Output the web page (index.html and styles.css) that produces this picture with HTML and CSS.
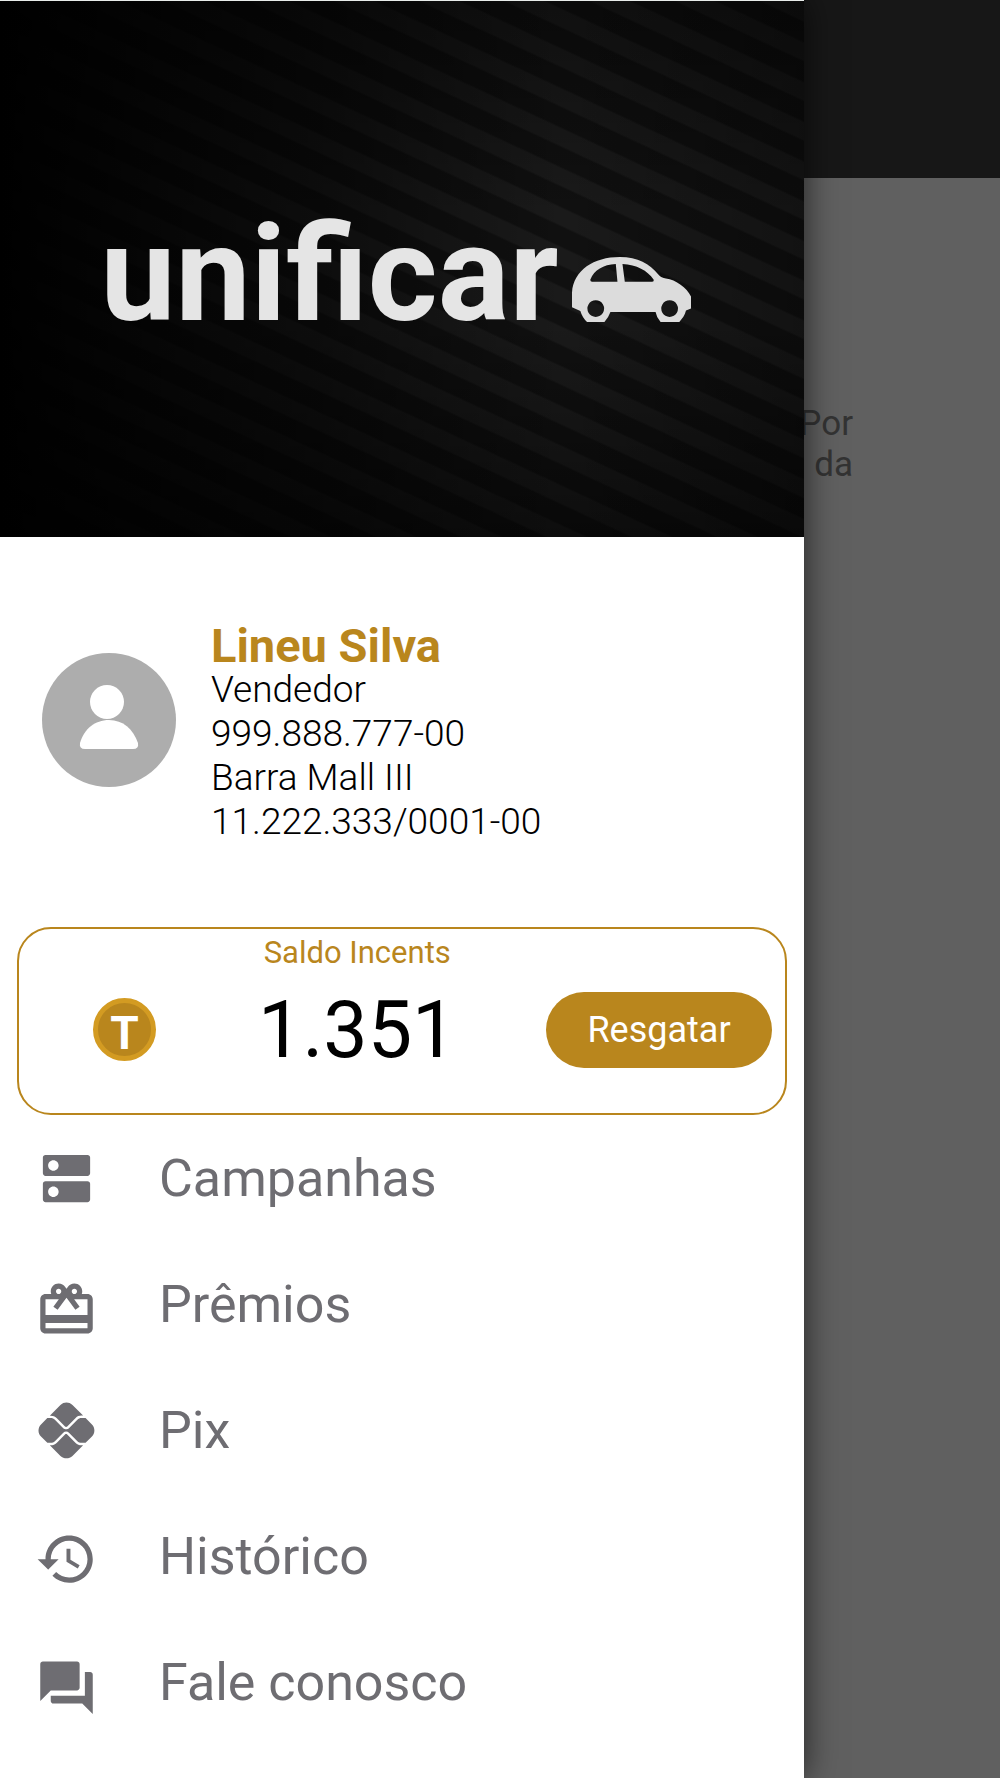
FILE: index.html
```html
<!DOCTYPE html>
<html lang="pt-BR">
<head>
<meta charset="utf-8">
<meta name="viewport" content="width=device-width, initial-scale=1">
<title>unificar</title>
<link rel="stylesheet" href="styles.css">
</head>
<body>
<div class="app">
  <main class="page">
    <div class="page-bar"></div>
    <p class="page-text">Por<br>da</p>
  </main>

  <aside class="drawer">
    <header class="brand">
      <span class="brand-name">unificar</span>
      <svg class="brand-car" viewBox="547 169 356 194" aria-hidden="true">
        <path fill="currentColor" fill-rule="evenodd" d="M547 275C552 208 612 169 690 169C745 169 778 189 806 222Q814 232 828 233C858 237 890 260 903 287V323L888 329C885 343 877 353 868 363H812Q800 350 797 333H662Q656 350 644 363H592Q578 350 572 330L547 319ZM602 236C614 208 640 192 678 190L683 243H607Q601 243 602 236ZM698 190C740 192 773 210 791 236Q793 243 786 243H705ZM618 298a25 25 0 1 0 .1 0ZM839 298a25 25 0 1 0 .1 0Z"/>
      </svg>
    </header>

    <section class="profile">
      <svg class="avatar" viewBox="0 0 134 134" aria-hidden="true">
        <circle cx="67" cy="67" r="67" fill="#adadad"/>
        <circle cx="65" cy="49" r="17" fill="#fff"/>
        <path fill="#fff" d="M38 90C42 76 53 67 67 67S91 76 96 90Q97 96 91 96H43Q37 96 38 90Z"/>
      </svg>
      <div class="profile-info">
        <h1 class="profile-name">Lineu Silva</h1>
        <p>Vendedor</p>
        <p>999.888.777-00</p>
        <p>Barra Mall III</p>
        <p>11.222.333/0001-00</p>
      </div>
    </section>

    <section class="balance">
      <h2 class="balance-label">Saldo Incents</h2>
      <span class="coin">T</span>
      <p class="balance-value">1.351</p>
      <button class="redeem" type="button">Resgatar</button>
    </section>

    <nav class="menu">
      <a class="menu-item" href="#campanhas">
        <svg class="menu-icon" viewBox="0 0 24 24" aria-hidden="true"><path d="M20 13H4c-.55 0-1 .45-1 1v6c0 .55.45 1 1 1h16c.55 0 1-.45 1-1v-6c0-.55-.45-1-1-1zM7 19c-1.1 0-2-.9-2-2s.9-2 2-2 2 .9 2 2-.9 2-2 2zM20 3H4c-.55 0-1 .45-1 1v6c0 .55.45 1 1 1h16c.55 0 1-.45 1-1V4c0-.55-.45-1-1-1zM7 9c-1.1 0-2-.9-2-2s.9-2 2-2 2 .9 2 2-.9 2-2 2z"/></svg>
        Campanhas
      </a>
      <a class="menu-item" href="#premios">
        <svg class="menu-icon" viewBox="0 -2 24 24" aria-hidden="true"><path d="M20 6h-2.18c.11-.31.18-.65.18-1 0-1.66-1.34-3-3-3-1.05 0-1.96.54-2.5 1.35l-.5.67-.5-.68C10.96 2.54 10.05 2 9 2 7.34 2 6 3.34 6 5c0 .35.07.69.18 1H4c-1.11 0-1.99.89-1.99 2L2 19c0 1.11.89 2 2 2h16c1.11 0 2-.89 2-2V8c0-1.11-.89-2-2-2zm-5-2c.55 0 1 .45 1 1s-.45 1-1 1-1-.45-1-1 .45-1 1-1zM9 4c.55 0 1 .45 1 1s-.45 1-1 1-1-.45-1-1 .45-1 1-1zm11 15H4v-2h16v2zm0-5H4V8h5.08L7 10.83 8.62 12 11 8.76l1-1.36 1 1.36L15.380 12 17 10.830 14.920 8H20v6z"/></svg>
        Prêmios
      </a>
      <a class="menu-item" href="#pix">
        <svg class="menu-icon" viewBox="-32 -32 576 576" aria-hidden="true"><path d="M242.400 292.500C247.800 287.100 257.100 287.100 262.500 292.500L339.500 369.500C353.700 383.700 372.600 391.500 392.600 391.500H407.700L310.600 488.600C280.300 518.100 231.100 518.100 200.800 488.600L103.300 391.200H112.600C132.600 391.200 151.500 383.400 165.700 369.200L242.400 292.500zM262.500 218.900C256.100 224.400 247.900 224.500 242.400 218.900L165.700 142.200C151.500 127.100 132.600 120.200 112.600 120.200H103.300L200.700 22.760C231.100-7.586 280.300-7.586 310.600 22.760L407.800 119.900H392.600C372.600 119.900 353.700 127.700 339.500 141.900L262.500 218.900zM112.600 142.700C126.400 142.700 139.100 148.300 149.700 158.100L226.400 234.800C233.600 241.100 243 245.600 252.500 245.600C261.900 245.600 271.300 241.100 278.500 234.800L355.500 157.800C365.300 148.100 378.800 142.500 392.600 142.500H430.300L488.600 200.800C518.900 231.100 518.900 280.300 488.600 310.600L430.300 368.900H392.600C378.800 368.900 365.300 363.300 355.500 353.500L278.500 276.500C264.600 262.600 240.300 262.600 226.400 276.600L149.700 353.200C139.100 363 126.400 368.600 112.600 368.600H80.780L22.760 310.600C-7.586 280.300-7.586 231.100 22.760 200.800L80.780 142.700H112.600z"/></svg>
        Pix
      </a>
      <a class="menu-item" href="#historico">
        <svg class="menu-icon" viewBox="0 -1 24 24" aria-hidden="true"><path d="M13 3c-4.970 0-9 4.030-9 9H1l3.890 3.890.070.140L9 12H6c0-3.870 3.130-7 7-7s7 3.130 7 7-3.130 7-7 7c-1.930 0-3.680-.790-4.940-2.060l-1.420 1.420C8.270 19.990 10.510 21 13 21c4.970 0 9-4.030 9-9s-4.030-9-9-9zm-1 5v5l4.280 2.540.720-1.210-3.500-2.080V8H12z"/></svg>
        Histórico
      </a>
      <a class="menu-item" href="#fale-conosco">
        <svg class="menu-icon" viewBox="0 -2 24 24" aria-hidden="true"><path d="M21 6h-2v9H6v2c0 .55.45 1 1 1h11l4 4V7c0-.55-.45-1-1-1zm-4 6V3c0-.55-.45-1-1-1H3c-.55 0-1 .45-1 1v14l4-4h10c.55 0 1-.45 1-1z"/></svg>
        Fale conosco
      </a>
    </nav>
  </aside>
</div>
</body>
</html>
```
FILE: styles.css
```css
* {
  box-sizing: border-box;
  margin: 0;
}

body {
  font-family: Roboto, "Liberation Sans", sans-serif;
  color: #000;
}

.app {
  position: relative;
  min-height: 100vh;
  background: #606060;
  overflow: hidden;
}

/* Dimmed page behind the open drawer */
.page {
  position: absolute;
  inset: 0;
}

.page-bar {
  height: 178px;
  background: #171717;
}

.page-text {
  padding: 225px 147px 0 0;
  font-size: 35px;
  line-height: 41px;
  text-align: right;
  color: #333;
}

.drawer {
  position: relative;
  width: 80.4%;
  min-height: 100vh;
  padding-bottom: 24px;
  background: #fff;
  box-shadow: 0 0 32px rgba(0, 0, 0, 0.65);
}

.brand {
  display: flex;
  align-items: flex-end;
  justify-content: center;
  gap: 14px;
  height: 537px;
  padding: 0 12px 215px 0;
  border-top: 1px solid #e8ecea;
  color: #e5e5e5;
  background:
    linear-gradient(90deg, #000 0%, rgba(0, 0, 0, 0.5) 40%, transparent 70%, rgba(0, 0, 0, 0.3) 100%),
    linear-gradient(180deg, rgba(0, 0, 0, 0.4), transparent 40%, transparent 60%, rgba(0, 0, 0, 0.5)),
    repeating-linear-gradient(25deg, #101010 0 14px, #1a1a1a 16px 31px, #101010 33px 36px);
}

.brand-name {
  font-size: 134px;
  font-weight: 700;
  line-height: 94px;
}

.brand-car {
  width: 119px;
  height: 65px;
  color: #dcdcdc;
}

.profile {
  display: flex;
  align-items: flex-start;
  gap: 35px;
  padding: 87px 42px 83px;
}

.avatar {
  flex: none;
  width: 134px;
  height: 134px;
  margin-top: 29px;
}

.profile-info {
  font-size: 37px;
  font-weight: 300;
  line-height: 44px;
}

.profile-name {
  font-size: 47px;
  font-weight: 700;
  line-height: 44px;
  color: #b9861d;
}

.balance {
  display: grid;
  grid-template-columns: 165px auto 1fr;
  grid-template-rows: 36px 1fr;
  align-items: center;
  height: 188px;
  margin: 0 17px;
  padding: 6px 13px 25px 74px;
  border: 2px solid #b9861d;
  border-radius: 34px;
}

.coin {
  width: 63px;
  height: 63px;
  padding-top: 8px;
  border: 5px solid #d39b22;
  border-radius: 50%;
  background: #b9861d;
  font-size: 46px;
  font-weight: 700;
  line-height: 45px;
  text-align: center;
  color: #fff;
}

.balance-label {
  grid-column: 2;
  justify-self: center;
  font-size: 31px;
  font-weight: 400;
  line-height: 36px;
  color: #b9861d;
}

.coin {
  grid-column: 1;
}

.balance-value {
  justify-self: center;
  font-size: 79px;
  line-height: 92px;
}

.redeem {
  justify-self: end;
  width: 226px;
  height: 76px;
  border: 0;
  border-radius: 38px;
  background: #b9861d;
  font: inherit;
  font-size: 36px;
  color: #fff;
}

.menu {
  display: flex;
  flex-direction: column;
}

.menu-item {
  display: flex;
  align-items: center;
  gap: 61px;
  height: 126px;
  padding-left: 35px;
  font-size: 52px;
  color: #6e6d72;
  text-decoration: none;
}

.menu-icon {
  flex: none;
  width: 63px;
  height: 63px;
  fill: currentColor;
}
```
